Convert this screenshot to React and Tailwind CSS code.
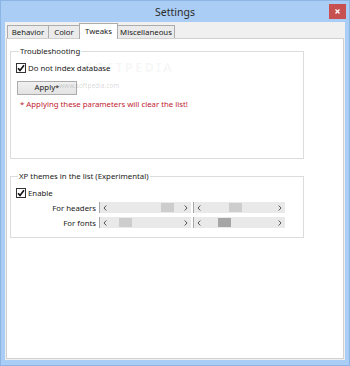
import React from "react";

const Check = () => (
  <span className="w-[10px] h-[10px] border border-[#333333] bg-white flex items-center justify-center shrink-0">
    <svg width="8" height="8" viewBox="0 0 8 8">
      <path d="M1 4.2 L3 6.4 L7 1.2" fill="none" stroke="#111111" strokeWidth="1.6" />
    </svg>
  </span>
);

const Scroll = ({ thumb, dark }) => (
  <div className="w-[92px] h-[11px] bg-[#e9e9e9] border-l border-[#a8a8a8] flex items-center">
    <div className="w-[9px] h-full flex items-center justify-center">
      <svg width="4" height="6" viewBox="0 0 4 6">
        <path d="M3.3 0.5 L1 3 L3.3 5.5" fill="none" stroke="#555555" strokeWidth="1" />
      </svg>
    </div>
    <div className="flex-1 h-full flex items-center">
      <div className={thumb + " w-[13px] h-[9px] " + (dark ? "bg-[#a6a6a6]" : "bg-[#cdcdcd]")} />
    </div>
    <div className="w-[10px] h-full flex items-center justify-center">
      <svg width="4" height="6" viewBox="0 0 4 6">
        <path d="M0.7 0.5 L3 3 L0.7 5.5" fill="none" stroke="#555555" strokeWidth="1" />
      </svg>
    </div>
  </div>
);

export default function App() {
  return (
    <div className="w-[350px] h-[366px] bg-[#a9cdf4] border border-[#8db5e3] flex flex-col font-['Noto_Sans',sans-serif] text-[7.8px] leading-[12px] text-[#1a1a1a]">
      <div className="h-[21px] relative flex items-center justify-center shrink-0">
        <span className="text-[10.5px] leading-none text-[#2b2b2b] mt-[1px]">Settings</span>
        <div className="absolute right-[3px] top-[3px] w-[17px] h-[15px] bg-[#c75050] flex items-center justify-center">
          <svg width="5" height="5" viewBox="0 0 5 5">
            <path d="M0.5 0.5 L4.5 4.5 M4.5 0.5 L0.5 4.5" stroke="white" strokeWidth="1.3" />
          </svg>
        </div>
      </div>
      <div className="mx-[4px] mb-[5px] flex-1 bg-[#f0f0f0] px-[1px] pb-[1px] flex flex-col">
        <div className="h-[16px] flex items-end pl-[1px] shrink-0">
          <div className="w-[42px] h-[13px] border-t border-l border-r border-[#acacac] bg-[#ebebeb] flex items-center justify-center">Behavior</div>
          <div className="-ml-px w-[32px] h-[13px] border-t border-l border-r border-[#acacac] bg-[#ebebeb] flex items-center justify-center">Color</div>
          <div className="-ml-px -mb-px relative z-10 w-[39px] h-[16px] border-t border-l border-r border-[#acacac] bg-white flex items-center justify-center pb-[1px]">Tweaks</div>
          <div className="-ml-px w-[58px] h-[13px] border-t border-l border-r border-[#acacac] bg-[#ebebeb] flex items-center justify-center">Miscellaneous</div>
        </div>
        <div className="flex-1 bg-white border border-[#d0d0d0] relative pl-[3px] pt-[6px] flex flex-col">
          <fieldset className="w-[294px] h-[114px] border border-[#dcdcdc] pl-[5px]">
            <legend className="ml-[3px] px-[1px] leading-[12px]">Troubleshooting</legend>
            <div className="mt-[5px] h-[12px] flex items-center gap-[2px]">
              <Check />
              <span>Do not index database</span>
            </div>
            <button className="mt-[7px] ml-[1px] w-[60px] h-[14px] border border-[#acacac] bg-gradient-to-b from-[#f0f0f0] to-[#e3e3e3] flex items-center justify-center text-[7.8px] leading-none text-[#1a1a1a]">
              Apply*
            </button>
            <div className="mt-[3px] ml-[4px] text-[#bf1a2f]">* Applying these parameters will clear the list!</div>
          </fieldset>
          <fieldset className="mt-[11px] w-[294px] h-[68px] border border-[#dcdcdc] pl-[5px]">
            <legend className="ml-[2px] px-[1px] leading-[12px]">XP themes in the list (Experimental)</legend>
            <div className="mt-[5px] h-[12px] flex items-center gap-[2px]">
              <Check />
              <span>Enable</span>
            </div>
            <div className="-ml-[5px] mt-[3px] flex flex-col gap-[4px]">
              <div className="flex items-center h-[11px]">
                <span className="w-[86px] text-right pr-[1px]">For headers</span>
                <div className="ml-[2px] flex gap-[2px]">
                  <Scroll thumb="ml-[52px]" />
                  <Scroll thumb="ml-[26px]" />
                </div>
              </div>
              <div className="flex items-center h-[11px]">
                <span className="w-[86px] text-right pr-[1px]">For fonts</span>
                <div className="ml-[2px] flex gap-[2px]">
                  <Scroll thumb="ml-[10px]" />
                  <Scroll thumb="ml-[15px]" dark />
                </div>
              </div>
            </div>
          </fieldset>
          <span className="absolute left-[78px] top-[22px] text-[13px] leading-none font-bold tracking-[2px] text-black/[0.05] pointer-events-none">SOFTPEDIA</span>
          <span className="absolute left-[52px] top-[44px] text-[6.5px] leading-none text-black/[0.18] pointer-events-none">www.softpedia.com</span>
        </div>
      </div>
    </div>
  );
}
